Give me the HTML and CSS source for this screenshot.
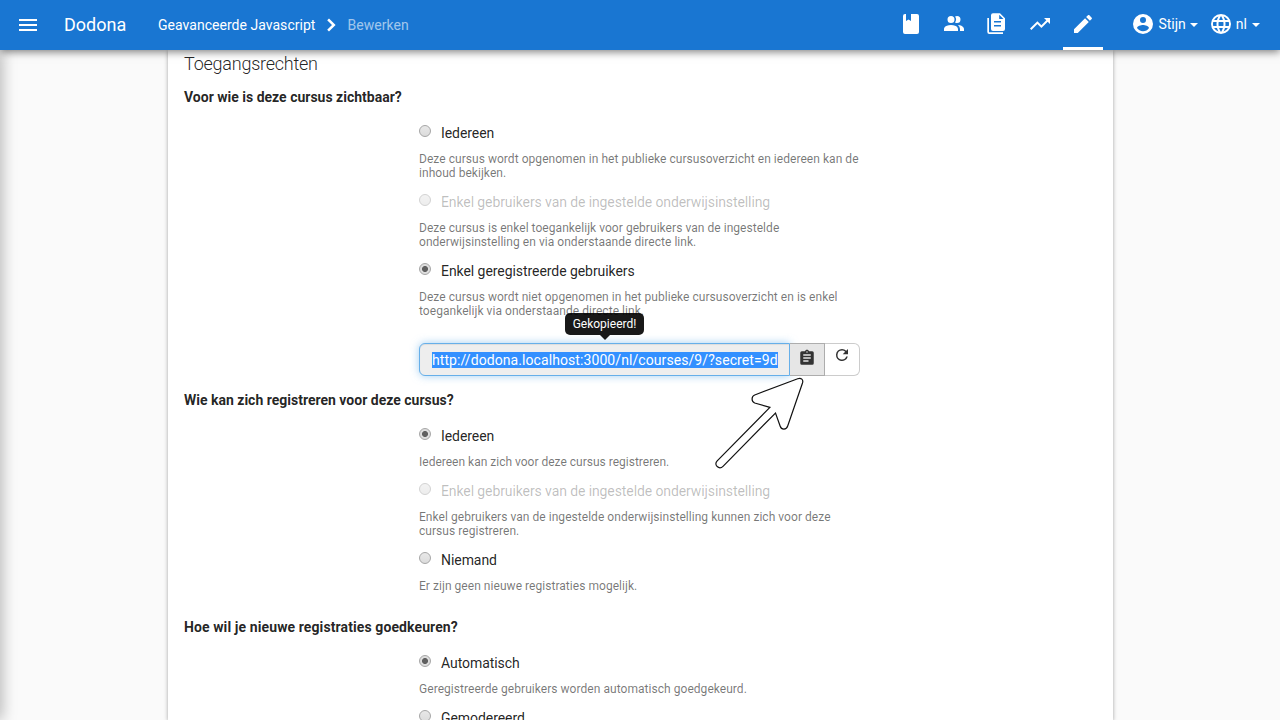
FILE: index.html
```html
<!DOCTYPE html>
<html lang="nl">
<head>
<meta charset="utf-8">
<title>Dodona - Bewerken</title>
<link rel="stylesheet" href="styles.css">
</head>
<body>
<header class="navbar">
  <svg class="icon menu" viewBox="0 0 24 24"><path d="M3 6h18v2H3V6m0 5h18v2H3v-2m0 5h18v2H3v-2z"/></svg>
  <a class="brand">Dodona</a>
  <nav class="crumbs"><span>Geavanceerde Javascript</span><svg class="icon" viewBox="0 0 24 24"><path d="M8.200 16.800L13 12 8.200 7.200 10 5.400l6.600 6.600-6.600 6.600-1.800-1.800z"/></svg><span class="current">Bewerken</span></nav>
  <div class="tabs">
    <a class="tab"><svg class="icon" viewBox="0 0 24 24"><path d="M18 22a2 2 0 0 0 2-2V4a2 2 0 0 0-2-2h-6v7L9.500 7.500 7 9V2H6a2 2 0 0 0-2 2v16a2 2 0 0 0 2 2h12z"/></svg></a>
    <a class="tab"><svg class="icon" viewBox="0 0 24 24"><path d="M16 17v2H2v-2s0-4 7-4 7 4 7 4m-3.500-9.500A3.500 3.500 0 1 0 9 11a3.500 3.500 0 0 0 3.500-3.500m3.440 5.500A5.320 5.320 0 0 1 18 17v2h4v-2s0-3.630-6.060-4M15 4a3.390 3.390 0 0 0-1.930.590 5 5 0 0 1 0 5.820A3.390 3.390 0 0 0 15 11a3.500 3.500 0 0 0 0-7z"/></svg></a>
    <a class="tab"><svg class="icon" viewBox="0 0 24 24"><path fill-rule="evenodd" d="M8 1.300h7l5 5V17a2 2 0 0 1-2 2H8a2 2 0 0 1-2-2V3.300a2 2 0 0 1 2-2M14.200 2.800V7h4.300l-4.300-4.200M9 9v1.400h7V9H9m0 4v1.400h7V13H9M2.300 6H4v14.300h14V22H4.300a2 2 0 0 1-2-2V6z"/></svg></a>
    <a class="tab"><svg class="icon" viewBox="0 0 24 24"><path d="M16 6l2.290 2.290-4.880 4.880-4-4L2 16.590 3.410 18l6-6 4 4 6.300-6.290L22 12V6h-6z"/></svg></a>
    <a class="tab active"><svg class="icon" viewBox="0 0 24 24"><path d="M20.710 7.040c.390-.390.390-1.040 0-1.410l-2.340-2.340c-.370-.390-1.020-.390-1.410 0l-1.840 1.830 3.750 3.750M3 17.250V21h3.750L17.810 9.930l-3.750-3.750L3 17.250z"/></svg></a>
  </div>
  <div class="account">
    <a class="drop user"><svg class="icon" viewBox="0 0 24 24"><path d="M12 19.200c-2.500 0-4.710-1.280-6-3.200.030-2 4-3.100 6-3.100s5.970 1.100 6 3.100a7.230 7.230 0 0 1-6 3.200M12 5a3 3 0 1 1 0 6 3 3 0 0 1 0-6m0-3a10 10 0 1 0 0 20 10 10 0 0 0 0-20z"/></svg>Stijn<i class="caret"></i></a>
    <a class="drop"><svg class="icon" viewBox="0 0 24 24"><path d="M16.360 14c.080-.660.140-1.320.140-2s-.060-1.340-.140-2h3.380c.160.640.260 1.310.260 2s-.100 1.360-.260 2m-5.150 5.560c.600-1.110 1.060-2.310 1.380-3.560h2.950a8.030 8.030 0 0 1-4.330 3.560M14.340 14H9.660c-.100-.660-.160-1.320-.160-2s.060-1.350.160-2h4.680c.090.650.160 1.320.160 2s-.070 1.340-.160 2M12 19.960c-.830-1.200-1.500-2.530-1.910-3.960h3.820c-.410 1.430-1.080 2.760-1.910 3.960M8 8H5.080A7.920 7.920 0 0 1 9.400 4.440C8.800 5.550 8.350 6.750 8 8m-2.920 8H8c.350 1.250.800 2.450 1.400 3.560A8 8 0 0 1 5.080 16m-.820-2C4.100 13.360 4 12.690 4 12s.100-1.360.260-2h3.380c-.080.660-.140 1.320-.140 2s.060 1.340.140 2M12 4.030c.830 1.200 1.500 2.540 1.910 3.970h-3.820C10.500 6.570 11.170 5.230 12 4.030M18.920 8h-2.950a15.650 15.650 0 0 0-1.380-3.560c1.840.630 3.370 1.900 4.330 3.560M12 2a10 10 0 1 0 0 20 10 10 0 0 0 0-20z"/></svg>nl<i class="caret"></i></a>
  </div>
</header>
<div class="page">
  <div class="drawer-shadow"></div>
  <main class="card">
    <h4 class="title">Toegangsrechten</h4>
    <h5 class="question">Voor wie is deze cursus zichtbaar?</h5>
    <section class="options">
      <label class="option"><i class="radio"></i>Iedereen</label>
      <p class="help">Deze cursus wordt opgenomen in het publieke cursusoverzicht en iedereen kan de inhoud bekijken.</p>
      <label class="option disabled"><i class="radio"></i>Enkel gebruikers van de ingestelde onderwijsinstelling</label>
      <p class="help">Deze cursus is enkel toegankelijk voor gebruikers van de ingestelde onderwijsinstelling en via onderstaande directe link.</p>
      <label class="option"><i class="radio checked"></i>Enkel geregistreerde gebruikers</label>
      <p class="help">Deze cursus wordt niet opgenomen in het publieke cursusoverzicht en is enkel toegankelijk via onderstaande directe link.</p>
      <div class="link-group">
        <div class="link-field"><span class="selection">http://dodona.localhost:3000/nl/courses/9/?secret=9d</span></div>
        <a class="btn copy"><svg viewBox="0 0 24 24"><path fill-rule="evenodd" d="M17 9H7V7h10m0 6H7v-2h10m-3 6H7v-2h7M12 3a1 1 0 1 1 0 2 1 1 0 0 1 0-2m7 0h-4.180C14.400 1.840 13.300 1 12 1s-2.400.840-2.820 2H5a2 2 0 0 0-2 2v14a2 2 0 0 0 2 2h14a2 2 0 0 0 2-2V5a2 2 0 0 0-2-2z"/></svg></a>
        <a class="btn refresh"><svg viewBox="0 0 24 24"><path d="M17.650 6.350A7.960 7.960 0 0 0 12 4a8 8 0 1 0 7.730 10h-2.080A6 6 0 1 1 12 6c1.660 0 3.140.690 4.220 1.780L13 11h7V4l-2.350 2.350z"/></svg></a>
        <div class="tooltip">Gekopieerd!</div>
        <svg class="pointer" viewBox="0 0 100 100"><path d="M87 1.200C90.500 0 92.900 2 91.800 5.500L77 48.500C75.700 52.500 70.800 52.600 69.500 48.800L64.800 35.500 12.300 88.800C8.500 92.500 2.500 87.500 6.500 83.300L59.200 29.800 44 25.500C40.500 24 40.500 18.800 44 17.500z"/></svg>
      </div>
    </section>
    <h5 class="question">Wie kan zich registreren voor deze cursus?</h5>
    <section class="options registration">
      <label class="option"><i class="radio checked"></i>Iedereen</label>
      <p class="help short">Iedereen kan zich voor deze cursus registreren.</p>
      <label class="option disabled"><i class="radio"></i>Enkel gebruikers van de ingestelde onderwijsinstelling</label>
      <p class="help">Enkel gebruikers van de ingestelde onderwijsinstelling kunnen zich voor deze cursus registreren.</p>
      <label class="option"><i class="radio"></i>Niemand</label>
      <p class="help">Er zijn geen nieuwe registraties mogelijk.</p>
    </section>
    <h5 class="question approval">Hoe wil je nieuwe registraties goedkeuren?</h5>
    <section class="options">
      <label class="option"><i class="radio checked"></i>Automatisch</label>
      <p class="help">Geregistreerde gebruikers worden automatisch goedgekeurd.</p>
      <label class="option"><i class="radio"></i>Gemodereerd</label>
    </section>
  </main>
</div>
</body>
</html>
```
FILE: styles.css
```css
* { box-sizing: border-box; }
body { margin: 0; height: 720px; overflow: hidden; display: flex; flex-direction: column; background: #fafafa; color: rgba(0,0,0,.87); font: 14px/20px Roboto, sans-serif; }
.navbar { height: 50px; flex: none; display: flex; align-items: center; padding: 0 20px 0 16px; background: #1976d2; color: #fff; z-index: 2; position: relative; box-shadow: 0 2px 8px rgba(0,0,0,.5); }
.icon { width: 24px; height: 24px; fill: #fff; flex: none; }
.brand { margin-left: 24px; width: 94px; font-size: 18px; }
.crumbs { display: flex; align-items: center; letter-spacing: .03px; }
.crumbs .icon { margin: 0 4px; }
.current { color: rgba(255,255,255,.6); }
.tabs { display: flex; height: 50px; gap: 3px; margin-left: auto; margin-right: 28px; }
.tab { width: 40px; height: 50px; padding: 12px 8px 0; }
.tab.active { border-bottom: 3px solid #fff; }
.account { display: flex; gap: 11px; }
.drop { display: flex; align-items: center; padding-bottom: 2px; }
.drop .icon { margin-right: 3px; }
.caret { margin-left: 5px; margin-top: 2px; border: 4px solid transparent; border-top-color: #fff; border-bottom: 0; }
.user .caret { margin-left: 4px; }
.page { flex: 1; min-height: 0; position: relative; display: flex; padding-left: 168px; overflow: hidden; }
.drawer-shadow { position: absolute; left: -10px; top: 0; bottom: 0; width: 10px; box-shadow: 0 0 16px rgba(0,0,0,.4); }
.card { width: 945px; height: 670px; padding: 4px 16px 0; background: #fff; box-shadow: 0 1px 4px rgba(0,0,0,.35); }
.title { margin: 0 0 13px; font-size: 18px; line-height: 20px; font-weight: 300; letter-spacing: -.24px; }
.question { margin: 0; font-size: 14px; line-height: 20px; font-weight: 700; }
.approval { letter-spacing: .1px; }
.options { width: 441px; margin: 16px 0 14px 235px; display: flex; flex-direction: column; }
.registration { margin-bottom: 12px; }
.option { display: flex; height: 20px; margin-bottom: 9px; letter-spacing: -.06px; }
.radio { width: 12px; height: 12px; margin: 2px 10px 0 0; border: 1px solid #a6a6a6; border-radius: 50%; background: linear-gradient(#e8e8e8, #dcdcdc); }
.checked { background: radial-gradient(circle, #606060 0 2.600px, #dedede 3.400px); }
.disabled { color: rgba(0,0,0,.26); letter-spacing: -.1px; }
.disabled .radio { opacity: .5; }
.help { margin: 0 0 12px; font-size: 12px; line-height: 14px; color: rgba(0,0,0,.54); letter-spacing: .045px; }
.short { letter-spacing: 0; }
.link-group { position: relative; display: flex; height: 33px; margin-top: 13px; }
.link-field { width: 371px; padding: 6px 12px; border: 1px solid #66afe9; border-radius: 6px 0 0 6px; background: #eee; box-shadow: inset 0 1px 1px rgba(0,0,0,.075), 0 0 8px rgba(102,175,233,.6); white-space: nowrap; letter-spacing: .08px; z-index: 1; }
.selection { background: #3390ff; color: #fff; }
.btn { height: 33px; border: 1px solid #ccc; border-left: 0; background: #fff; z-index: 1; }
.btn svg { display: block; width: 18px; height: 18px; fill: #333; }
.copy { width: 35px; padding: 5px 8px; background: #e6e6e6; border-color: #adadad; }
.refresh { width: 35px; padding: 2px 8px; border-radius: 0 6px 6px 0; }
.tooltip { position: absolute; left: 146px; top: -30px; width: 79px; height: 22px; border-radius: 5px; background: rgba(0,0,0,.9); color: #fff; text-align: center; font-size: 12px; line-height: 22px; z-index: 2; }
.tooltip::after { content: ""; position: absolute; left: 35px; top: 22px; border: 5px solid transparent; border-top-color: rgba(0,0,0,.9); border-bottom: 0; }
.pointer { position: absolute; left: 291px; top: 34px; width: 100px; height: 100px; fill: #fff; stroke: #111; stroke-width: 1.200; z-index: 3; }
.pointer path { transform: translate(.7px, .5px); }
```
